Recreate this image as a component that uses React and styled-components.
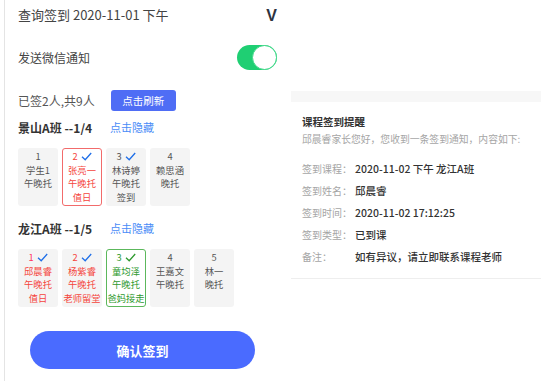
import React from "react";
import styled, { createGlobalStyle } from "styled-components";

const GlobalStyle = createGlobalStyle`
  html, body {
    margin: 0;
    padding: 0;
    background: #fff;
    overflow: hidden;
  }
  body {
    font-family: "Noto Sans CJK SC", "Noto Sans", sans-serif;
    color: #333;
  }
`;

const Page = styled.div`
  display: flex;
  height: 381px;
`;

const LeftPanel = styled.div`
  width: 259px;
  margin-left: 4px;
  padding: 0 14px 0 13px;
  border-left: 1px solid #e4e4e4;
`;

const HeaderRow = styled.div`
  display: flex;
  align-items: center;
  justify-content: space-between;
  height: 28px;
  font-size: 13px;
  color: #444;
`;

const VMark = styled.span`
  margin-top: 3px;
  font-family: "Liberation Sans", sans-serif;
  font-size: 16px;
  font-weight: 700;
  color: #2d3340;
`;

const NotifyRow = styled.div`
  display: flex;
  align-items: center;
  justify-content: space-between;
  height: 25px;
  margin-top: 17px;
  font-size: 12px;
  color: #444;
`;

const Switch = styled.div`
  position: relative;
  width: 40px;
  height: 25px;
  border-radius: 13px;
  background: ${(p) => (p.$on ? "#1fcf73" : "#ddd")};
`;

const Knob = styled.div`
  position: absolute;
  top: 0;
  right: 0;
  width: 23px;
  height: 23px;
  border-radius: 50%;
  background: #fff;
  border: 1px solid #3fd888;
`;

const CountRow = styled.div`
  display: flex;
  align-items: center;
  height: 21px;
  margin-top: 20px;
  font-size: 12px;
  color: #555;
`;

const RefreshButton = styled.button`
  margin-left: 16px;
  width: 65px;
  height: 21px;
  border: none;
  border-radius: 3px;
  background: #4f6df5;
  color: #fff;
  font-family: inherit;
  font-size: 10.5px;
  padding: 0;
`;

const GroupTitle = styled.div`
  display: flex;
  align-items: center;
  height: 16px;
  margin-top: ${(p) => p.$gap}px;
  font-size: 12px;
  font-weight: 700;
  color: #333;
`;

const HideLink = styled.span`
  margin-left: 18px;
  font-size: 11px;
  font-weight: 400;
  color: #4a8cf7;
`;

const CardRow = styled.div`
  display: flex;
  gap: 4px;
  margin-top: 13px;
`;

const tones = {
  red: { border: "#f26b6b", bg: "#fff" },
  green: { border: "#5cb85c", bg: "#fff" },
};

const Card = styled.div`
  box-sizing: border-box;
  width: 40px;
  height: 58px;
  padding: 1px 0;
  border: 1px solid ${(p) => (p.$tone ? tones[p.$tone].border : "transparent")};
  border-radius: 3px;
  background: ${(p) => (p.$tone ? tones[p.$tone].bg : "#f4f4f4")};
  text-align: center;
  font-size: 9.3px;
  line-height: 13.5px;
  color: #555;
  white-space: nowrap;
`;

const NumLine = styled.div`
  display: flex;
  align-items: center;
  justify-content: center;
  gap: 3px;
  height: 13.5px;
  font-size: 9.3px;
  color: ${(p) => p.$color || "#555"};
`;

const CardLine = styled.div`
  color: ${(p) => p.$color || "#555"};
`;

const ConfirmButton = styled.button`
  display: block;
  margin: 24px 0 0 12px;
  width: 225px;
  height: 38px;
  border: none;
  border-radius: 19px;
  background: #4a6bff;
  color: #fff;
  font-family: inherit;
  font-size: 13px;
  font-weight: 700;
`;

const RightPanel = styled.div`
  flex: 1;
  padding-top: 91px;
`;

const Strip = styled.div`
  height: 11px;
  background: #f7f7f7;
`;

const Notice = styled.div`
  padding: 12px 0 11px 11px;
  border-bottom: 1px solid #eeeeee;
`;

const NoticeTitle = styled.div`
  height: 16px;
  line-height: 16px;
  font-size: 10.5px;
  font-weight: 700;
  color: #333;
`;

const NoticeSub = styled.div`
  margin-top: 2px;
  height: 14px;
  line-height: 14px;
  font-size: 9.8px;
  color: #a5a5a5;
`;

const InfoList = styled.div`
  margin-top: 11px;
`;

const InfoRow = styled.div`
  display: flex;
  align-items: center;
  height: 22px;
  font-size: 10px;
`;

const InfoLabel = styled.span`
  width: 53px;
  color: #a5a5a5;
`;

const InfoValue = styled.span`
  font-size: 10.5px;
  font-weight: 500;
  color: #333;
`;

const RED = "#f5453d";
const PINK = "#ff3560";
const GREEN = "#2f9a2f";
const BLUE = "#1f6fe8";

function Check({ color }) {
  return (
    <svg width="11" height="9" viewBox="0 0 11 9">
      <polyline
        points="1,4.8 4.2,7.8 10.2,1"
        fill="none"
        stroke={color}
        strokeWidth="1.3"
      />
    </svg>
  );
}

function StudentCard({ no, numColor, check, tone, lines }) {
  return (
    <Card $tone={tone}>
      <NumLine $color={numColor}>
        {no}
        {check && <Check color={check} />}
      </NumLine>
      {lines.map((l, i) => (
        <CardLine key={i} $color={l.color}>
          {l.text}
        </CardLine>
      ))}
    </Card>
  );
}

const groups = [
  {
    title: "景山A班 --1/4",
    gap: 8,
    students: [
      { no: 1, lines: [{ text: "学生1" }, { text: "午晚托" }] },
      {
        no: 2,
        numColor: RED,
        check: BLUE,
        tone: "red",
        lines: [
          { text: "张亮一", color: RED },
          { text: "午晚托", color: RED },
          { text: "值日", color: RED },
        ],
      },
      {
        no: 3,
        check: BLUE,
        lines: [{ text: "林诗婷" }, { text: "午晚托" }, { text: "签到" }],
      },
      { no: 4, lines: [{ text: "赖思涵" }, { text: "晚托" }] },
    ],
  },
  {
    title: "龙江A班 --1/5",
    gap: 14,
    students: [
      {
        no: 1,
        numColor: PINK,
        check: BLUE,
        lines: [
          { text: "邱晨睿", color: RED },
          { text: "午晚托", color: RED },
          { text: "值日", color: RED },
        ],
      },
      {
        no: 2,
        numColor: RED,
        check: BLUE,
        lines: [
          { text: "杨紫睿", color: RED },
          { text: "午晚托", color: RED },
          { text: "老师留堂", color: RED },
        ],
      },
      {
        no: 3,
        numColor: GREEN,
        check: GREEN,
        tone: "green",
        lines: [
          { text: "童均泽", color: GREEN },
          { text: "午晚托", color: GREEN },
          { text: "爸妈接走", color: GREEN },
        ],
      },
      { no: 4, lines: [{ text: "王嘉文" }, { text: "午晚托" }] },
      { no: 5, lines: [{ text: "林一" }, { text: "晚托" }] },
    ],
  },
];

const info = [
  ["签到课程：", "2020-11-02 下午 龙江A班"],
  ["签到姓名：", "邱晨睿"],
  ["签到时间：", "2020-11-02 17:12:25"],
  ["签到类型：", "已到课"],
  ["备注：", "如有异议，请立即联系课程老师"],
];

export default function App() {
  return (
    <Page>
      <GlobalStyle />
      <LeftPanel>
        <HeaderRow>
          <span>查询签到 2020-11-01 下午</span>
          <VMark>V</VMark>
        </HeaderRow>
        <NotifyRow>
          <span>发送微信通知</span>
          <Switch $on>
            <Knob />
          </Switch>
        </NotifyRow>
        <CountRow>
          <span>已签2人,共9人</span>
          <RefreshButton>点击刷新</RefreshButton>
        </CountRow>
        {groups.map((g) => (
          <React.Fragment key={g.title}>
            <GroupTitle $gap={g.gap}>
              {g.title}
              <HideLink>点击隐藏</HideLink>
            </GroupTitle>
            <CardRow>
              {g.students.map((s) => (
                <StudentCard key={s.no} {...s} />
              ))}
            </CardRow>
          </React.Fragment>
        ))}
        <ConfirmButton>确认签到</ConfirmButton>
      </LeftPanel>
      <RightPanel>
        <Strip />
        <Notice>
          <NoticeTitle>课程签到提醒</NoticeTitle>
          <NoticeSub>邱晨睿家长您好，您收到一条签到通知，内容如下:</NoticeSub>
          <InfoList>
            {info.map(([label, value]) => (
              <InfoRow key={label}>
                <InfoLabel>{label}</InfoLabel>
                <InfoValue>{value}</InfoValue>
              </InfoRow>
            ))}
          </InfoList>
        </Notice>
      </RightPanel>
    </Page>
  );
}
